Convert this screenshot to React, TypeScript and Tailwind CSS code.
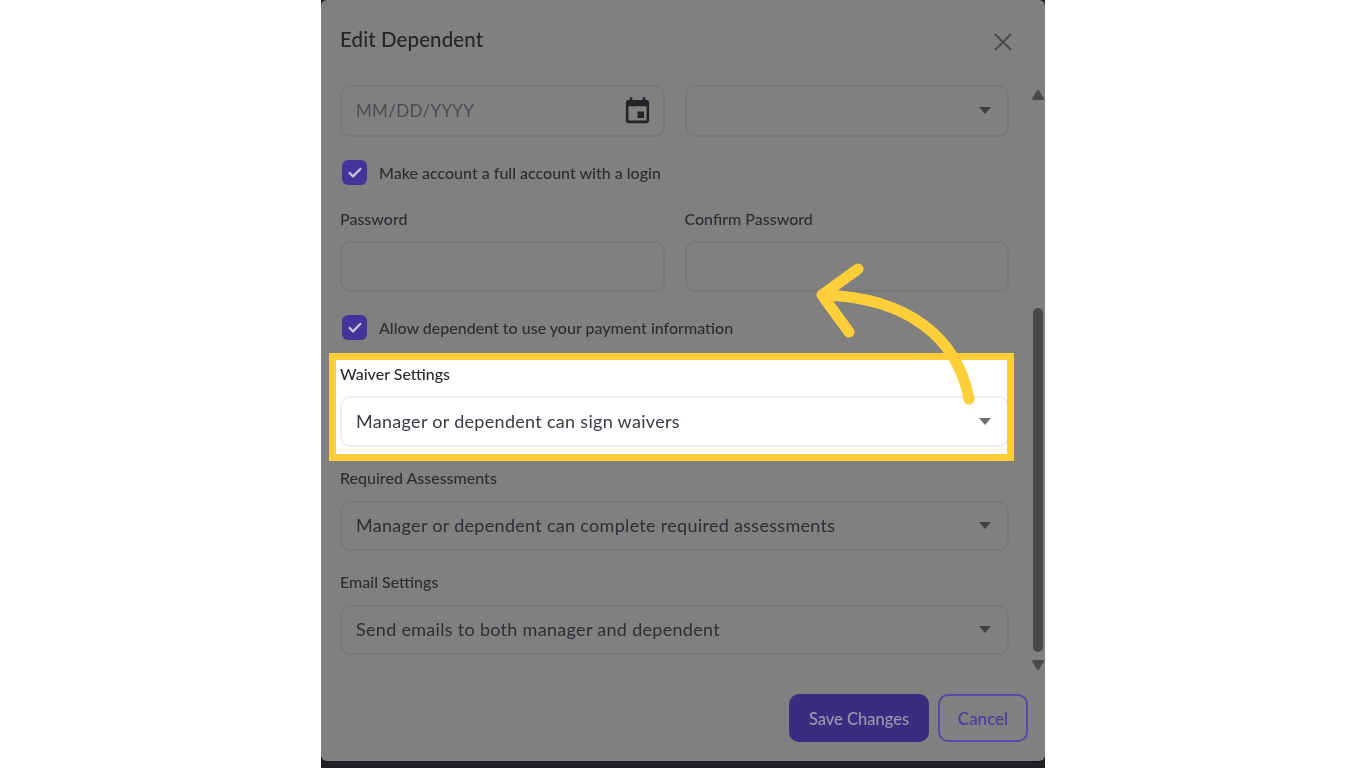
import { Check } from 'lucide-react';
import { MdEvent } from 'react-icons/md';

const font = { fontFamily: 'Lato, "Noto Sans", sans-serif' };

const labelText = 'text-[16px] font-medium leading-[24px] text-[#2c2c33]';

function Caret({ light }: { light?: boolean }) {
  return (
    <svg width="12" height="7" viewBox="0 0 12 7" className="shrink-0">
      <path d="M0 0 H12 L6 7 Z" fill={light ? '#6f6f6f' : '#3f3f42'} />
    </svg>
  );
}

function Checkbox({ label }: { label: string }) {
  return (
    <div className="flex h-[25px] items-center gap-[12px] pl-[2px]">
      <span className="flex h-[25px] w-[25px] items-center justify-center rounded-[6px] bg-[#46339a]">
        <Check size={16} strokeWidth={3.5} className="text-[#c8c5d6]" />
      </span>
      <span className={`mt-[1px] ${labelText}`}>{label}</span>
    </div>
  );
}

function Field({ value, height, light }: { value?: string; height: string; light?: boolean }) {
  return (
    <div
      className={`flex ${height} items-center justify-between rounded-[10px] border-2 pl-[14px] pr-[16px] ${
        light ? 'border-[#eeeeee] bg-white text-[#3a3a46]' : 'border-[#787878] pb-[1px] text-[#2d2d35]'
      }`}
    >
      <span className="text-[18px] tracking-[0.3px]">{value}</span>
      <Caret light={light} />
    </div>
  );
}

export default function App() {
  return (
    <div className="flex min-h-screen justify-center bg-white" style={font}>
      <div className="relative h-[768px] w-[724px] overflow-hidden bg-[#1f1f24] blur-[0.3px]">
        <div className="flex h-[761px] flex-col rounded-[6px] bg-[#808080]">
          <div className="flex h-[85px] shrink-0 justify-between pl-[19px] pr-[33px]">
            <h1 className="mt-[25px] text-[20.5px] font-medium leading-[28px] tracking-[0.1px] text-[#25252b]">Edit Dependent</h1>
            <svg width="18" height="18" viewBox="0 0 18 18" className="mt-[33px]">
              <path d="M1 1 L17 17 M17 1 L1 17" stroke="#4b4b4e" strokeWidth="2" fill="none" />
            </svg>
          </div>

          <div className="flex h-[590px] shrink-0">
            <div className="ml-[19px] w-[669px]">
              <div className="grid grid-cols-2 gap-x-[20px]">
                <div className="flex h-[52px] items-center justify-between rounded-[10px] border-2 border-[#787878] pl-[14px] pr-[10px]">
                  <span className="text-[17px] tracking-[0.3px] text-[#4c4c55]">MM/DD/YYYY</span>
                  <MdEvent size={31} className="text-[#232328]" />
                </div>
                <Field height="h-[52px]" />
              </div>

              <div className="mt-[23px]">
                <Checkbox label="Make account a full account with a login" />
              </div>

              <div className="mt-[22px] grid grid-cols-2 gap-x-[20px] gap-y-[10px]">
                <label className={labelText}>Password</label>
                <label className={labelText}>Confirm Password</label>
                <div className="h-[51px] rounded-[10px] border-2 border-[#787878]" />
                <div className="h-[51px] rounded-[10px] border-2 border-[#787878]" />
              </div>

              <div className="mt-[23px]">
                <Checkbox label="Allow dependent to use your payment information" />
              </div>

              <section className="ml-[-11px] mr-[-5px] mt-[13px] overflow-hidden border-[7px] border-[#ffcf3a] bg-white pb-[7px] pl-[4px] pt-[2px]">
                <label className={`block ${labelText}`}>Waiver Settings</label>
                <div className="mt-[10px] w-[669px]">
                  <Field value="Manager or dependent can sign waivers" height="h-[51px]" light />
                </div>
              </section>

              <label className={`mt-[5px] block ${labelText}`}>Required Assessments</label>
              <div className="mt-[11px]">
                <Field value="Manager or dependent can complete required assessments" height="h-[50px]" />
              </div>

              <label className={`mt-[19px] block ${labelText}`}>Email Settings</label>
              <div className="mt-[11px]">
                <Field value="Send emails to both manager and dependent" height="h-[50px]" />
              </div>
            </div>

            <div className="ml-[22px] flex w-[14px] flex-col items-center">
              <svg width="12" height="10" viewBox="0 0 12 10" className="mt-[5px]">
                <path d="M6 1 L11 9 H1 Z" fill="#4a4a4a" stroke="#4a4a4a" strokeWidth="2" strokeLinejoin="round" />
              </svg>
              <div className="mt-[208px] h-[344px] w-[10px] rounded-[5px] bg-[#484848]" />
              <svg width="12" height="10" viewBox="0 0 12 10" className="mt-[8px]">
                <path d="M1 1 H11 L6 9 Z" fill="#4a4a4a" stroke="#4a4a4a" strokeWidth="2" strokeLinejoin="round" />
              </svg>
            </div>
          </div>

          <div className="mt-[19px] flex justify-end gap-[9px] pr-[17px]">
            <button className="h-[48px] w-[140px] rounded-[10px] bg-[#3b2c80] pt-[2px] text-[16.5px] font-medium text-[#9b97ad]">Save Changes</button>
            <button className="h-[48px] w-[90px] rounded-[10px] border-2 border-[#5648a6] pt-[2px] text-[17px] font-medium text-[#4a3ba0]">Cancel</button>
          </div>
        </div>

        <svg width="190" height="155" viewBox="800 255 190 155" className="absolute left-[479px] top-[255px]">
          <path
            d="M969 399 C958 340 910 297 822 295 M858 269 L822 295 L849 332"
            fill="none"
            stroke="#ffcf3a"
            strokeWidth="11"
            strokeLinecap="round"
            strokeLinejoin="round"
          />
        </svg>
      </div>
    </div>
  );
}
